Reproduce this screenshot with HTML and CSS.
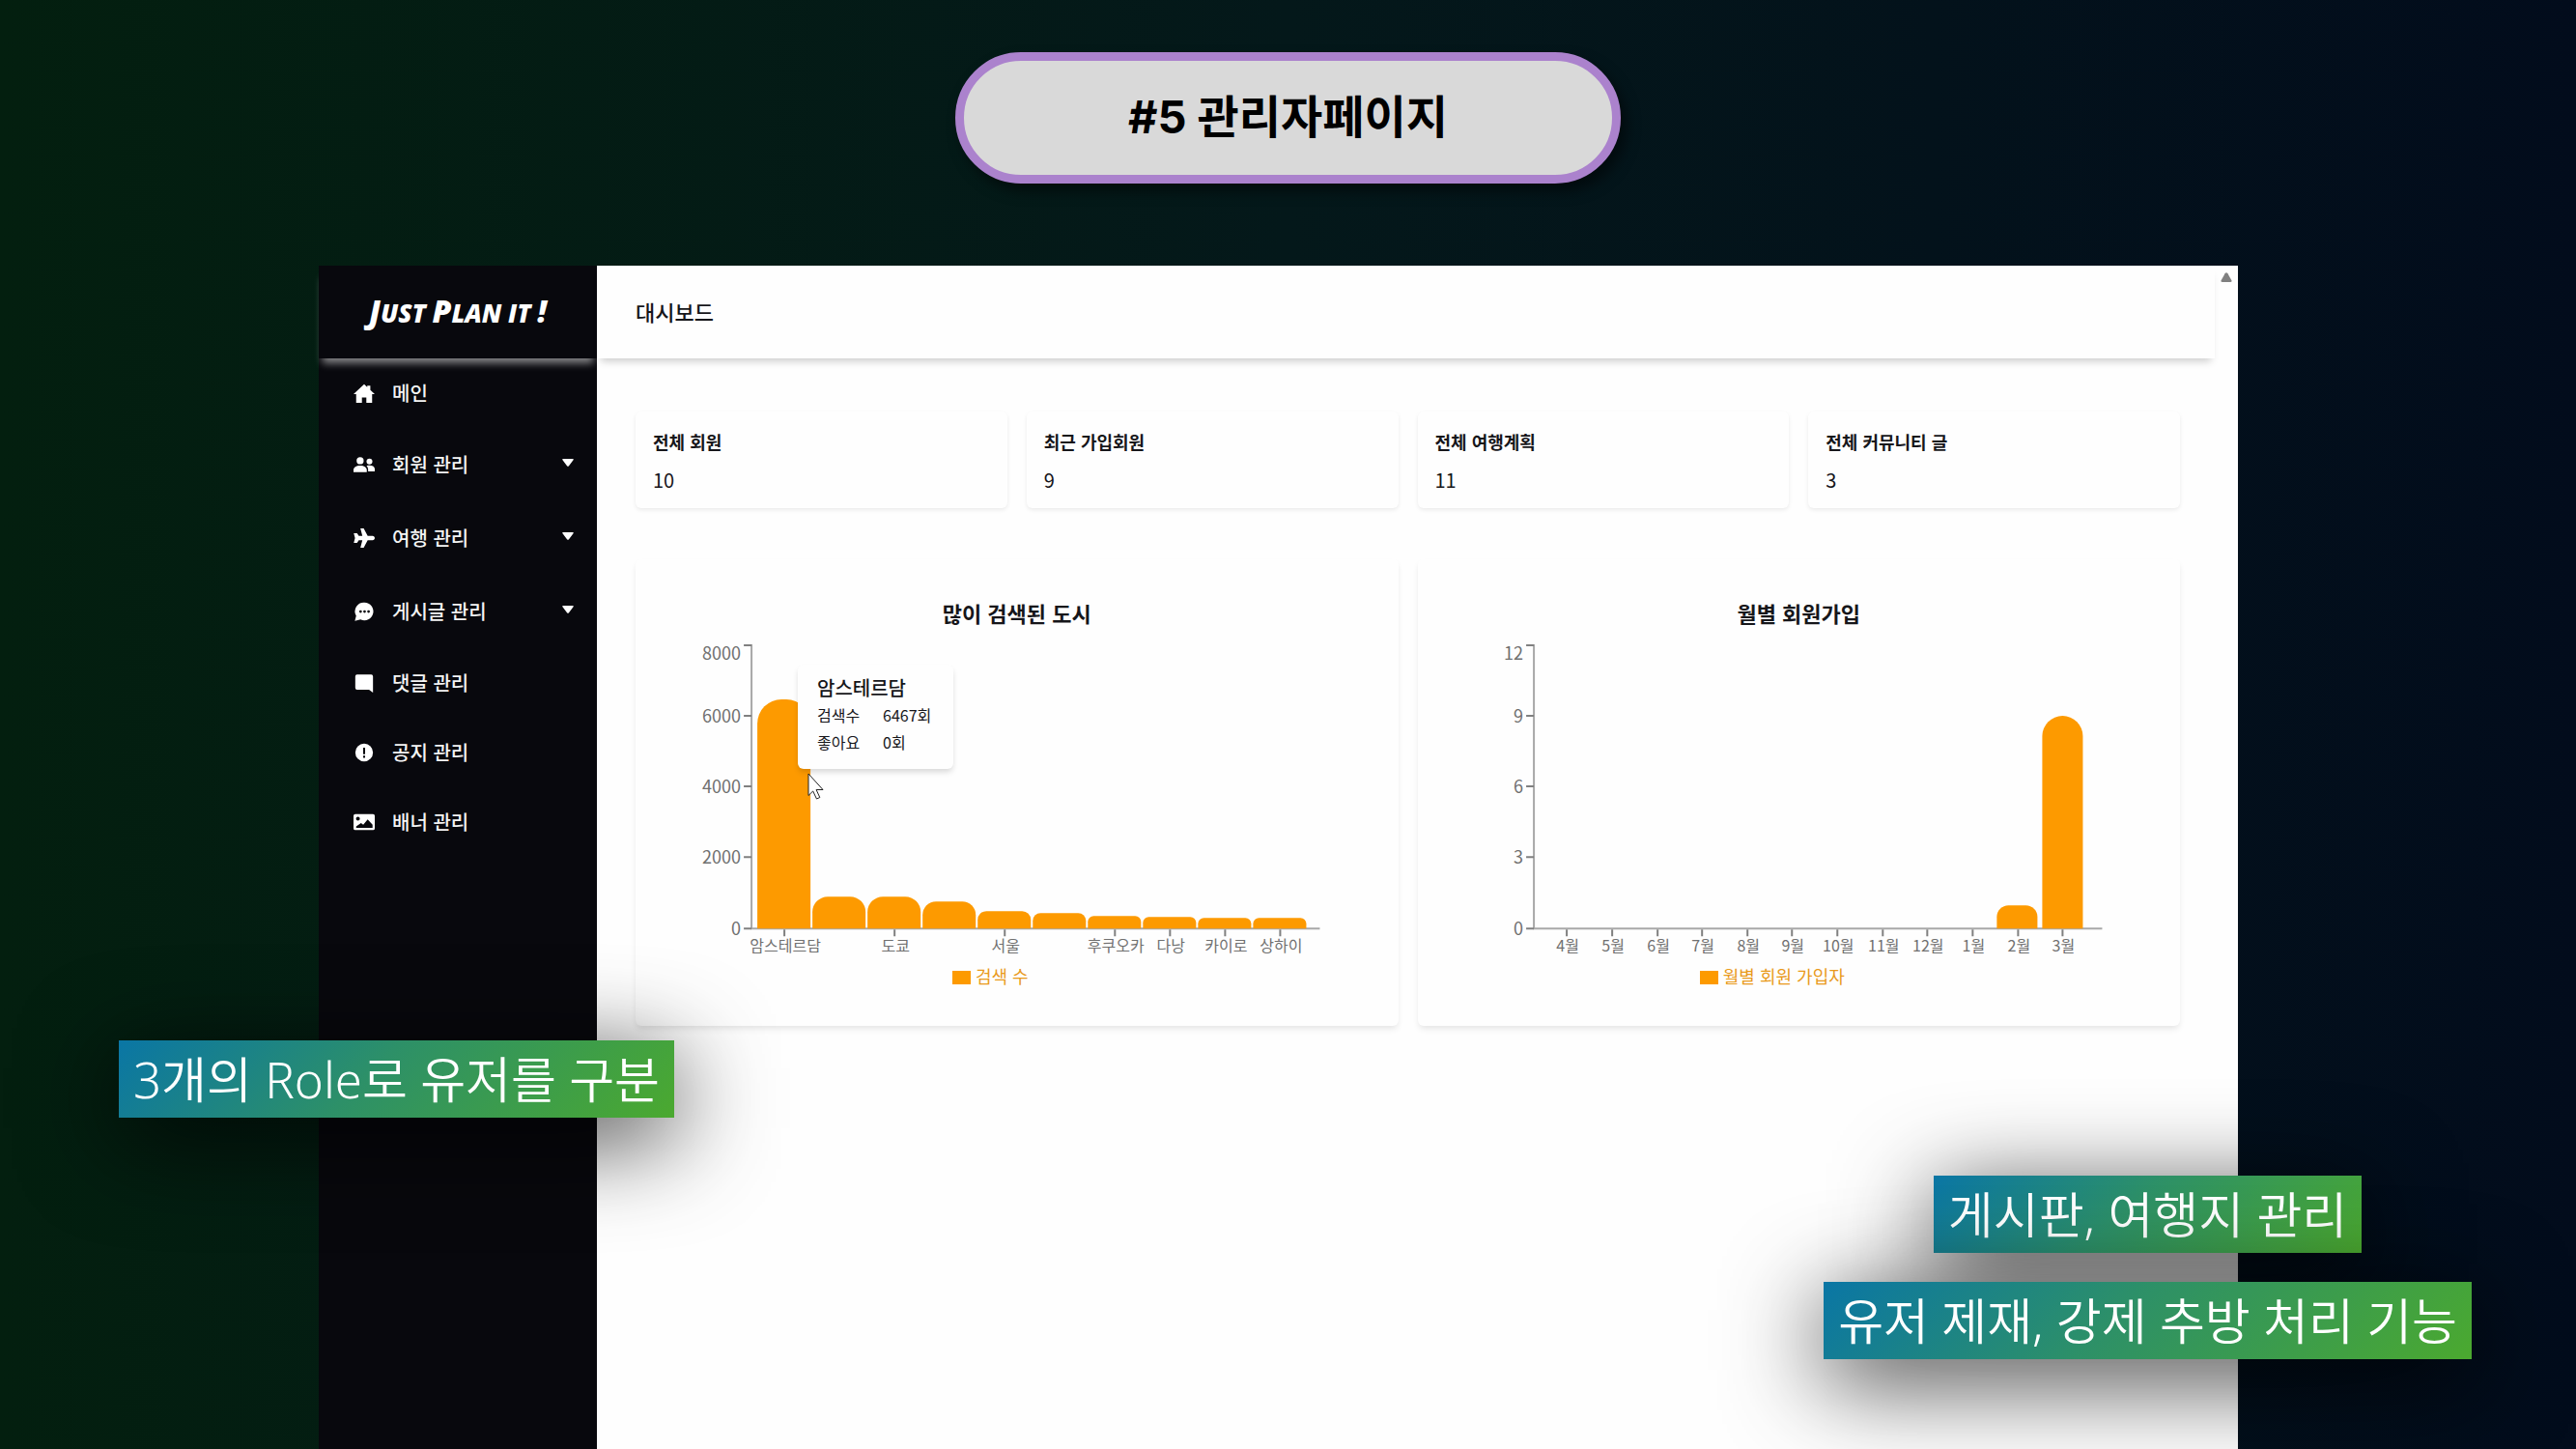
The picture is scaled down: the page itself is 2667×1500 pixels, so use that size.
FILE: index.html
```html
<!DOCTYPE html>
<html lang="ko">
<head>
<meta charset="utf-8">
<title>관리자페이지</title>
<link rel="stylesheet" href="styles.css">
</head>
<body>
<div class="slide">
  <h1 class="slide-title">#5 관리자페이지</h1>

  <div class="app">
    <aside class="sidebar">
      <a class="logo" href="#"><span><b>J</b>UST <b>P</b>LAN IT <b>!</b></span></a>
      <nav class="menu">
        <a class="menu-item" href="#">
          <svg class="icon" viewBox="0 0 24 24"><path d="M12 2l3.500 3.200V3.500h3.500v5L24 13h-3v10h-6.500v-6h-5v6H3V13H0z"/></svg>
          <span>메인</span>
        </a>
        <button class="menu-item menu-group" type="button">
          <svg class="icon" viewBox="0 0 24 24"><circle cx="7.500" cy="7.500" r="4"/><circle cx="18" cy="8.500" r="3.300"/><path d="M0 20.500v-2.500c0-3 3-5 7.500-5s7.500 2 7.500 5v2.500zM16.500 19.500v-2c0-1.800-.7-3.200-1.800-4.200 1-.4 2.100-.5 3.300-.5 3.700 0 6 1.700 6 4.200v2.500z"/></svg>
          <span>회원 관리</span>
          <svg class="caret" viewBox="0 0 12 8"><path d="M1 0h10q1.500 0 .5 1.300L7 7.300q-1 1-2 0L.5 1.300Q-.5 0 1 0z"/></svg>
        </button>
        <button class="menu-item menu-group" type="button">
          <svg class="icon" viewBox="0 0 24 24"><path d="M21.500 9.500c1.500 0 2.500 1.200 2.500 2.500s-1 2.500-2.500 2.500H16L11.500 23H7.800L10 14.500H6L4 17.500H.3L1.700 12 .3 6.500H4l2 3h4L7.800 1h3.700L16 9.500z"/></svg>
          <span>여행 관리</span>
          <svg class="caret" viewBox="0 0 12 8"><path d="M1 0h10q1.500 0 .5 1.300L7 7.300q-1 1-2 0L.5 1.300Q-.5 0 1 0z"/></svg>
        </button>
        <button class="menu-item menu-group" type="button">
          <svg class="icon" viewBox="0 0 24 24"><path fill-rule="evenodd" d="M12.500 2A10 10 0 1 1 8 21L1.500 22.500 3 17A10 10 0 0 1 12.500 2zM8 10.500a1.500 1.500 0 1 0 0 3 1.500 1.500 0 0 0 0-3zm4.500 0a1.500 1.500 0 1 0 0 3 1.500 1.500 0 0 0 0-3zm4.500 0a1.500 1.500 0 1 0 0 3 1.500 1.500 0 0 0 0-3z"/></svg>
          <span>게시글 관리</span>
          <svg class="caret" viewBox="0 0 12 8"><path d="M1 0h10q1.500 0 .5 1.300L7 7.300q-1 1-2 0L.5 1.300Q-.5 0 1 0z"/></svg>
        </button>
        <a class="menu-item" href="#">
          <svg class="icon" viewBox="0 0 24 24"><path d="M4 2.500h16q2 0 2 2V23l-4.500-3.500H4q-2 0-2-2v-13q0-2 2-2z"/></svg>
          <span>댓글 관리</span>
        </a>
        <a class="menu-item" href="#">
          <svg class="icon" viewBox="0 0 24 24"><path fill-rule="evenodd" d="M12 2a10 10 0 1 1 0 20 10 10 0 0 1 0-20zm-1.100 4.500v7.500h2.200V6.500zm0 9V18h2.200v-2.500z"/></svg>
          <span>공지 관리</span>
        </a>
        <a class="menu-item" href="#">
          <svg class="icon" viewBox="0 0 24 24"><path fill-rule="evenodd" d="M2 3h20q2 0 2 2v14q0 2-2 2H2q-2 0-2-2V5q0-2 2-2zm3 3a2.200 2.200 0 1 0 0 4.400A2.200 2.200 0 0 0 5 6zM3 18.500h18.500V15L16 9l-5 6-2.500-2L3 17z"/></svg>
          <span>배너 관리</span>
        </a>
      </nav>
    </aside>

    <main class="main">
      <header class="topbar"><h2>대시보드</h2></header>
      <div class="content">
        <section class="stats">
          <article class="card stat"><h3>전체 회원</h3><p>10</p></article>
          <article class="card stat"><h3>최근 가입회원</h3><p>9</p></article>
          <article class="card stat"><h3>전체 여행계획</h3><p>11</p></article>
          <article class="card stat"><h3>전체 커뮤니티 글</h3><p>3</p></article>
        </section>

        <section class="charts">
          <article class="card chart-card">
            <h3>많이 검색된 도시</h3>
            <div class="plot">
              <svg class="chart" viewBox="1 0 789 335" role="img" aria-label="많이 검색된 도시">
                <path class="axis" d="M121 7v294M120 301h589"/>
                <path class="tick" d="M113 8h8M113 81h8M113 154h8M113 227h8M113 301h8"/>
                <path class="tick" d="M155 302v7M269 302v7M383 302v7M497 302v7M554 302v7M611 302v7M668 302v7"/>
                <g class="bars">
                  <path d="M127 301V89a25 25 0 0 1 25-25h5a25 25 0 0 1 25 25v212z"/>
                  <path d="M184 301v-17a16 16 0 0 1 16-16h23a16 16 0 0 1 16 16v17z"/>
                  <path d="M241 301v-17a16 16 0 0 1 16-16h23a16 16 0 0 1 16 16v17z"/>
                  <path d="M298 301v-14a14 14 0 0 1 14-14h27a14 14 0 0 1 14 14v14z"/>
                  <path d="M355 301v-9a9 9 0 0 1 9-9h37a9 9 0 0 1 9 9v9z"/>
                  <path d="M412 301v-8a8 8 0 0 1 8-8h39a8 8 0 0 1 8 8v8z"/>
                  <path d="M469 301v-7a6 6 0 0 1 6-6h43a6 6 0 0 1 6 6v7z"/>
                  <path d="M526 301v-6a6 6 0 0 1 6-6h43a6 6 0 0 1 6 6v6z"/>
                  <path d="M583 301v-5a6 6 0 0 1 6-6h43a6 6 0 0 1 6 6v5z"/>
                  <path d="M640 301v-5a6 6 0 0 1 6-6h43a6 6 0 0 1 6 6v5z"/>
                </g>
                <g class="y-labels">
                  <text x="110" y="23">8000</text><text x="110" y="88">6000</text><text x="110" y="161">4000</text><text x="110" y="234">2000</text><text x="110" y="308">0</text>
                </g>
                <g class="x-labels">
                  <text x="156" y="325">암스테르담</text><text x="270" y="325">도쿄</text><text x="384" y="325">서울</text><text x="498" y="325">후쿠오카</text><text x="555" y="325">다낭</text><text x="612" y="325">카이로</text><text x="669" y="325">상하이</text>
                </g>
              </svg>
              <div class="tooltip">
                <strong>암스테르담</strong>
                <dl>
                  <dt>검색수</dt><dd>6467회</dd>
                  <dt>좋아요</dt><dd>0회</dd>
                </dl>
              </div>
              <svg class="cursor" viewBox="0 0 18 28"><path d="M1 1v22.500l4.700-4.500 3.800 8 3.300-1.500-3.700-8H16z"/></svg>
            </div>
            <p class="legend"><i class="swatch"></i>검색 수</p>
          </article>

          <article class="card chart-card">
            <h3>월별 회원가입</h3>
            <div class="plot">
              <svg class="chart" viewBox="1 0 789 335" role="img" aria-label="월별 회원가입">
                <path class="axis" d="M121 7v294M120 301h589"/>
                <path class="tick" d="M113 8h8M113 81h8M113 154h8M113 227h8M113 301h8"/>
                <path class="tick" d="M155 302v7M202 302v7M249 302v7M295 302v7M342 302v7M388 302v7M435 302v7M482 302v7M528 302v7M575 302v7M622 302v7M668 302v7"/>
                <g class="bars">
                  <path d="M600 301v-12a12 12 0 0 1 12-12h18a12 12 0 0 1 12 12v12z"/>
                  <path d="M647 301V102a21 21 0 0 1 42 0v199z"/>
                </g>
                <g class="y-labels">
                  <text x="110" y="23">12</text><text x="110" y="88">9</text><text x="110" y="161">6</text><text x="110" y="234">3</text><text x="110" y="308">0</text>
                </g>
                <g class="x-labels">
                  <text x="156" y="325">4월</text><text x="203" y="325">5월</text><text x="250" y="325">6월</text><text x="296" y="325">7월</text><text x="343" y="325">8월</text><text x="389" y="325">9월</text><text x="436" y="325">10월</text><text x="483" y="325">11월</text><text x="529" y="325">12월</text><text x="576" y="325">1월</text><text x="623" y="325">2월</text><text x="669" y="325">3월</text>
                </g>
              </svg>
            </div>
            <p class="legend"><i class="swatch"></i>월별 회원 가입자</p>
          </article>
        </section>
      </div>
    </main>

    <div class="scrollbar"><svg viewBox="0 0 12 10"><path d="M2 10Q0 10 .5 8.500L4.500 1.200q1.500-1.800 3 0l4 7.300Q12 10 10 10z"/></svg></div>
  </div>

  <div class="notes notes-left">
    <p class="note">3개의 Role로 유저를 구분</p>
  </div>
  <div class="notes notes-right">
    <p class="note">게시판, 여행지 관리</p>
    <p class="note">유저 제재, 강제 추방 처리 기능</p>
  </div>
</div>
</body>
</html>
```

FILE: styles.css
```css
* {
  box-sizing: border-box;
  margin: 0;
}

body {
  font-family: "Noto Sans CJK KR", sans-serif;
  color: #16161a;
}

/* Slide */
.slide {
  position: relative;
  display: flex;
  flex-direction: column;
  min-height: 100vh;
  padding: 54px 350px 0 330px;
  overflow: hidden;
  background: linear-gradient(to right, #031f0f, #04181a 50%, #020c1c);
}

.slide-title {
  align-self: center;
  width: 689px;
  margin-left: 20px;
  border: 9px solid #ab82cd;
  border-radius: 68px;
  padding: 24px 0 26px;
  background: #d9d9d9;
  box-shadow: 6px 8px 14px rgba(0, 0, 0, .5);
  color: #000;
  font: 700 47px/68px Inter, "Noto Sans CJK KR", sans-serif;
  text-align: center;
}

/* Application window */
.app {
  flex: 1;
  display: flex;
  margin-top: 85px;
  background: #fefefe;
}

.sidebar {
  flex: 0 0 288px;
  background: #08080d;
  color: #f4f4f4;
}

.logo {
  display: flex;
  align-items: center;
  justify-content: center;
  height: 96px;
  box-shadow: 0 9px 8px -4px rgba(255, 255, 255, .5);
  color: #fff;
  font: italic 800 26px/40px "Open Sans", sans-serif;
  text-decoration: none;
}

.logo b {
  font-size: 32px;
  font-weight: 800;
}

.menu {
  display: flex;
  flex-direction: column;
}

.menu-item {
  display: flex;
  align-items: center;
  gap: 18px;
  height: 72px;
  padding: 0 24px 0 36px;
  border: 0;
  background: none;
  color: inherit;
  font: 500 20px/28px "Noto Sans CJK KR", sans-serif;
  text-decoration: none;
}

.menu-group {
  height: 76px;
}

.icon {
  width: 22px;
  height: 22px;
  fill: #fff;
}

.caret {
  width: 12px;
  height: 8px;
  margin: 0 0 4px auto;
  fill: #fff;
}

.main {
  flex: 1;
  min-width: 0;
}

.topbar {
  display: flex;
  align-items: center;
  height: 96px;
  padding: 0 40px 2px;
  box-shadow: 0 7px 8px -4px rgba(0, 0, 0, .2);
}

.topbar h2 {
  font-size: 22px;
  font-weight: 500;
  line-height: 32px;
}

.content {
  display: flex;
  flex-direction: column;
  gap: 53px;
  padding: 55px 36px 55px 40px;
}

.card {
  border-radius: 6px;
  box-shadow: 0 4px 6px -1px rgba(0, 0, 0, .1);
}

.stats {
  display: grid;
  grid-template-columns: repeat(4, 1fr);
  gap: 20px;
}

.stat {
  display: flex;
  flex-direction: column;
  gap: 12px;
  padding: 17px 18px 15px;
  box-shadow: 0 2px 4px rgba(0, 0, 0, .08);
}

.stat h3 {
  font-size: 18px;
  font-weight: 700;
  line-height: 28px;
}

.stat p {
  font-size: 20px;
  line-height: 28px;
}

.charts {
  display: grid;
  grid-template-columns: repeat(2, 1fr);
  gap: 20px;
}

.chart-card {
  padding: 40px 0 37px;
}

.chart-card h3 {
  margin-bottom: 11px;
  font-size: 22px;
  font-weight: 700;
  line-height: 30px;
  text-align: center;
}

.plot {
  position: relative;
}

.chart {
  display: block;
  width: 100%;
}

.axis {
  fill: none;
  stroke: #a8a8a8;
  stroke-width: 2;
}

.tick {
  fill: none;
  stroke: #808080;
  stroke-width: 2;
}

.bars {
  fill: #fd9a00;
}

.y-labels,
.x-labels {
  fill: #707070;
}

.y-labels {
  font-size: 18px;
  text-anchor: end;
}

.x-labels {
  font-size: 16px;
  text-anchor: middle;
}

.legend {
  display: flex;
  align-items: center;
  justify-content: center;
  gap: 5px;
  padding-right: 55px;
  color: #e99a1c;
  font-size: 18px;
  line-height: 30px;
}

.swatch {
  width: 19px;
  height: 14px;
  margin-top: 4px;
  background: #fd9a00;
}

.tooltip {
  position: absolute;
  left: 168px;
  top: 28px;
  width: 161px;
  padding: 10px 0 14px 20px;
  border-radius: 6px;
  background: #fefefe;
  box-shadow: 0 4px 6px -1px rgba(0, 0, 0, .16);
  font-size: 16px;
  line-height: 28px;
}

.tooltip strong {
  display: block;
  font-size: 20px;
  font-weight: 500;
}

.tooltip dl {
  display: grid;
  grid-template-columns: 68px 1fr;
}

.tooltip dd {
  margin: 0;
}

.cursor {
  position: absolute;
  left: 178px;
  top: 140px;
  width: 18px;
  height: 28px;
  fill: #fff;
  stroke: #222;
  stroke-width: 1;
}

.scrollbar {
  display: flex;
  justify-content: center;
  flex: 0 0 24px;
  padding-top: 7px;
}

.scrollbar svg {
  width: 12px;
  height: 10px;
  fill: #808080;
}

/* Captions over the window */
.notes {
  position: absolute;
  display: flex;
  flex-direction: column;
  align-items: center;
  gap: 30px;
}

.notes-left {
  left: 123px;
  bottom: 343px;
}

.notes-right {
  right: 108px;
  bottom: 93px;
}

.note {
  padding: 5px 15px;
  background: linear-gradient(135deg, #0a76a5, #2d9068 45%, #4ba92f);
  box-shadow: 0 20px 100px rgba(0, 0, 0, .8);
  color: #fff;
  font: 350 51px/70px "Noto Sans", "Noto Sans CJK KR", sans-serif;
  white-space: nowrap;
}
```
